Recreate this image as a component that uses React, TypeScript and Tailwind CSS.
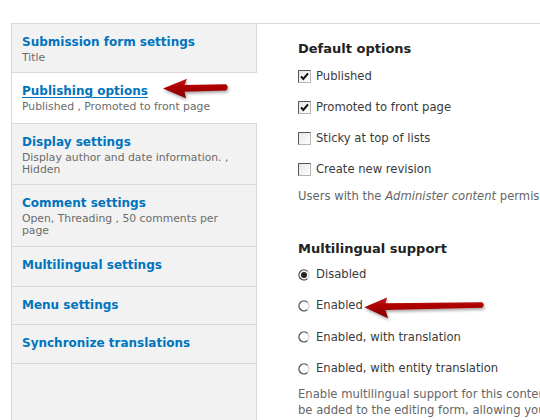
import React from "react";

type Tab = { title: string; summary?: string[]; h: string; active?: boolean };

const tabs: Tab[] = [
  { title: "Submission form settings", summary: ["Title"], h: "h-[49px]" },
  { title: "Publishing options", summary: ["Published , Promoted to front page"], h: "h-[51px]", active: true },
  { title: "Display settings", summary: ["Display author and date information. ,", "Hidden"], h: "h-[61px]" },
  { title: "Comment settings", summary: ["Open, Threading , 50 comments per", "page"], h: "h-[62px]" },
  { title: "Multilingual settings", h: "h-[40px]" },
  { title: "Menu settings", h: "h-[38px]" },
  { title: "Synchronize translations", h: "h-[39px]" },
];

function Checkbox({ checked }: { checked?: boolean }) {
  return (
    <svg width="13" height="13" viewBox="0 0 13 13" className="shrink-0">
      <defs>
        <linearGradient id="cbg" x1="0" y1="0" x2="1" y2="1">
          <stop offset="0" stopColor="#e6e6e6" />
          <stop offset="1" stopColor="#ffffff" />
        </linearGradient>
      </defs>
      <rect x="0.5" y="0.5" width="12" height="12" fill="url(#cbg)" stroke="#b5b5b5" />
      <path d="M0.5 12.5 V0.5 H12.5" fill="none" stroke="#555" />
      {checked && <path d="M3 6.3 L5.3 9 L10 3.3" fill="none" stroke="#111" strokeWidth="2" />}
    </svg>
  );
}

function Radio({ checked }: { checked?: boolean }) {
  return (
    <svg width="12" height="12" viewBox="0 0 12 12" className="shrink-0">
      <circle cx="6" cy="6" r="5" fill="#fff" stroke="#d0d0d0" strokeWidth="1.2" />
      <path d="M9.5 2.4 A5 5 0 1 0 9.2 9.8" fill="none" stroke="#555" strokeWidth="1.3" />
      {checked && <circle cx="6" cy="6" r="3" fill="#222" />}
    </svg>
  );
}

export default function App() {
  return (
    <div className="relative w-[540px] h-[420px] overflow-hidden bg-white font-['DejaVu_Sans',Verdana,sans-serif]">
      <div className="pt-[23px] pl-[11px] h-full">
        <div className="flex h-full border-t border-[#d9d9d9]">
          {/* Sidebar */}
          <div className="w-[246px] shrink-0 flex flex-col border-l border-[#d9d9d9] bg-[#f2f2f2]">
            {tabs.map((t) => (
              <div
                key={t.title}
                className={`${t.h} shrink-0 pt-[10px] pl-[10px] border-b border-[#d9d9d9] ${
                  t.active ? "bg-white" : "bg-[#f2f2f2] border-r border-r-[#d9d9d9]"
                }`}
              >
                <div
                  className={`text-[12px] leading-[16px] font-bold text-[#0074bd] whitespace-nowrap ${
                    t.active ? "underline underline-offset-2" : ""
                  }`}
                >
                  {t.title}
                </div>
                {t.summary && (
                  <div className="mt-[2px] text-[10.8px] leading-[11.5px] text-[#6b6b6b]">
                    {t.summary.map((s) => (
                      <div key={s} className="whitespace-nowrap">
                        {s}
                      </div>
                    ))}
                  </div>
                )}
              </div>
            ))}
            <div className="flex-1 border-r border-[#d9d9d9]" />
          </div>

          {/* Content */}
          <div className="flex-1 min-w-0 overflow-hidden pl-[41px] pt-[16px] text-[11.6px] text-[#3a3a3a]">
            <div className="text-[13px] leading-[18px] font-bold text-[#222]">Default options</div>
            <div className="mt-[3px] flex flex-col">
              {[
                ["Published", true],
                ["Promoted to front page", true],
                ["Sticky at top of lists", false],
                ["Create new revision", false],
              ].map(([l, c]) => (
                <div key={l as string} className="h-[31px] flex items-center gap-[5px] whitespace-nowrap">
                  <Checkbox checked={c as boolean} />
                  <span>{l as string}</span>
                </div>
              ))}
            </div>
            <div className="mt-[3px] leading-[16px] text-[#666] whitespace-nowrap">
              Users with the <em>Administer content</em> permission will be able to override these options.
            </div>

            <div className="mt-[36px] text-[13px] leading-[18px] font-bold text-[#222]">Multilingual support</div>
            <div className="mt-[1px] flex flex-col">
              {[
                ["Disabled", true],
                ["Enabled", false],
                ["Enabled, with translation", false],
                ["Enabled, with entity translation", false],
              ].map(([l, c]) => (
                <div key={l as string} className="h-[31.3px] flex items-center gap-[6px] whitespace-nowrap">
                  <Radio checked={c as boolean} />
                  <span>{l as string}</span>
                </div>
              ))}
            </div>
            <div className="mt-[2px] leading-[16px] text-[#666] whitespace-nowrap">
              <div>Enable multilingual support for this content type. If enabled, a language selection field will</div>
              <div>be added to the editing form, allowing you to select from one of the enabled languages.</div>
            </div>
          </div>
        </div>
      </div>

      {/* Annotation arrows */}
      <svg className="absolute inset-0 pointer-events-none" width="540" height="420" viewBox="0 0 540 420">
        <defs>
          <linearGradient id="arr" x1="0" y1="0" x2="0" y2="1">
            <stop offset="0" stopColor="#c41010" />
            <stop offset="0.5" stopColor="#a80000" />
            <stop offset="1" stopColor="#7a0000" />
          </linearGradient>
          <filter id="sh" x="-20%" y="-50%" width="140%" height="200%">
            <feDropShadow dx="1" dy="2" stdDeviation="1.5" floodColor="#000" floodOpacity="0.35" />
          </filter>
        </defs>
        <path
          d="M163 88.5 L187 78.8 L184.5 85 L226 84.3 Q229.5 87.3 226 90.5 L184.5 91.8 L186 98.3 Z"
          fill="url(#arr)"
          filter="url(#sh)"
        />
        <path
          d="M364.3 307.3 L387 297.6 L385.5 303.2 L482 302.3 Q485.5 305 482 307.8 L385.5 310 L388 318.3 Z"
          fill="url(#arr)"
          filter="url(#sh)"
        />
      </svg>
    </div>
  );
}
